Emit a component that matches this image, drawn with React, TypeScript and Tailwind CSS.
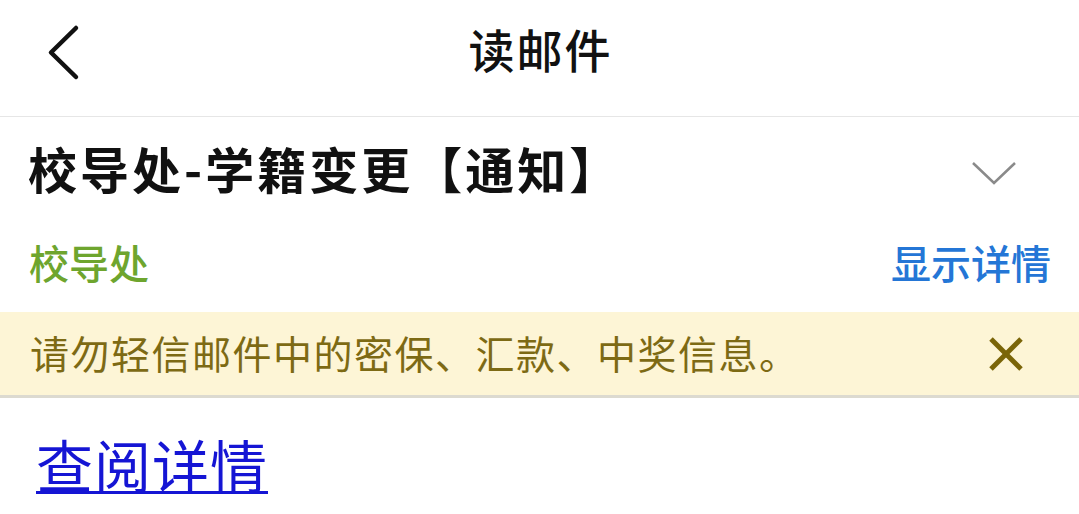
import React from "react";

export default function App() {
  const font = { fontFamily: '"Noto Sans CJK SC", "Noto Sans", sans-serif' };
  return (
    <div className="w-[1079px] h-[514px] bg-white overflow-hidden" style={font}>
      {/* Header */}
      <div className="relative h-[117px] flex items-center justify-center border-b border-[#e6e6e6]">
        <svg className="absolute left-[44px] top-[24px]" width="40" height="58" viewBox="0 0 40 58">
          <polyline points="32,4 7,28.5 32,53" fill="none" stroke="#111" strokeWidth="4.5" strokeLinecap="round" strokeLinejoin="round" />
        </svg>
        <div className="text-[46px] leading-none font-medium text-[#111] tracking-[2px] -mt-[20px] ml-[2px]">读邮件</div>
      </div>
      {/* Subject */}
      <div className="h-[112px] flex items-center justify-between pl-[28px] pr-[62px]">
        <div className="text-[49px] leading-none font-bold text-[#111] tracking-[3px] -mt-[11px]">校导处-学籍变更【通知】</div>
        <svg width="46" height="26" viewBox="0 0 46 26">
          <polyline points="2,3 23,23 44,3" fill="none" stroke="#8a8a8a" strokeWidth="2.5" />
        </svg>
      </div>
      {/* Sender row */}
      <div className="h-[83px] flex items-center justify-between pl-[29px] pr-[28px] pb-[18px]">
        <div className="text-[40px] leading-none font-medium text-[#6ea52e]">校导处</div>
        <div className="text-[40px] leading-none font-medium text-[#2476d6]">显示详情</div>
      </div>
      {/* Banner */}
      <div className="h-[86px] bg-[#fdf5d6] border-b-[3px] border-[#dcdad0] flex items-center justify-between pl-[30px] pr-[54px]">
        <div className="text-[39px] leading-none text-[#7d6a14] tracking-[1.5px] -mt-[3px]">请勿轻信邮件中的密保、汇款、中奖信息。</div>
        <svg width="38" height="38" viewBox="0 0 38 38">
          <line x1="4" y1="4" x2="34" y2="34" stroke="#7a6508" strokeWidth="5" />
          <line x1="34" y1="4" x2="4" y2="34" stroke="#7a6508" strokeWidth="5" />
        </svg>
      </div>
      {/* Body */}
      <div className="pl-[36px] pt-[37px]">
        <a href="#" className="text-[57px] leading-none text-[#1515d4] tracking-[1px] underline decoration-[3px] underline-offset-[3px]">查阅详情</a>
      </div>
    </div>
  );
}
